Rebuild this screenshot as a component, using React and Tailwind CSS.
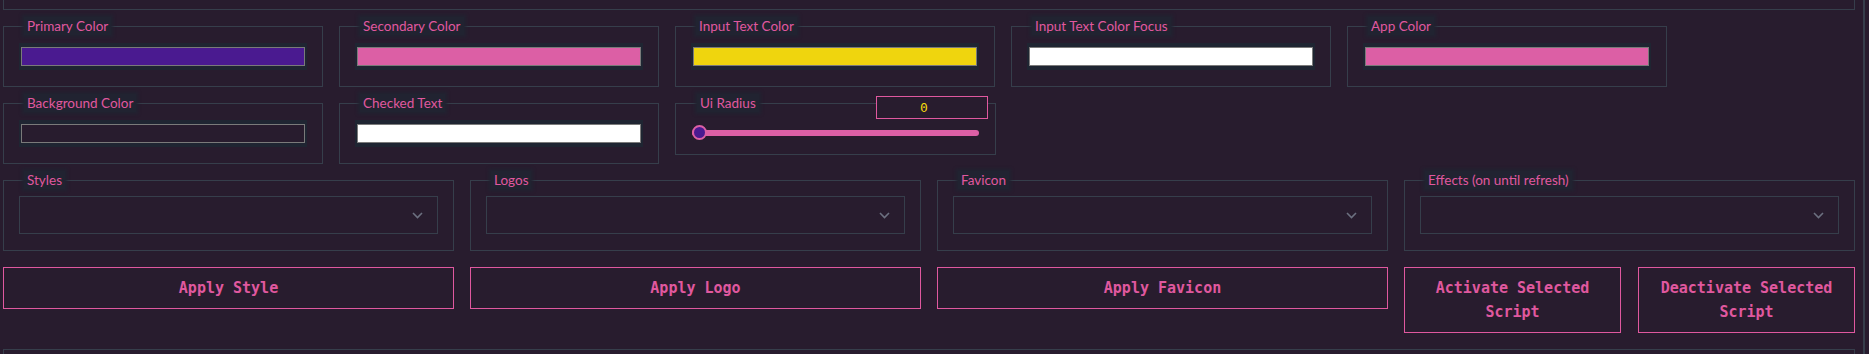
import React from "react";

function Legend({ children }) {
  return (
    <legend className="ml-[5px] px-[3px] h-[18px] leading-[18px] text-[13.5px] text-[#e0589f] bg-[#212331] shadow-[0_0_3px_2px_#212331] font-['Lato',sans-serif]">
      {children}
    </legend>
  );
}

function ColorField({ label, color }) {
  return (
    <fieldset className="w-[320px] border border-[#363e4b] px-[15px] pt-[8px] pb-[16px]">
      <Legend>{label}</Legend>
      <div className="h-[27px] bg-[#1f2532] px-[2px] py-[4px]">
        <div
          className="h-[19px] border border-[#7a7a7a]"
          style={{ backgroundColor: color }}
        />
      </div>
    </fieldset>
  );
}

function RadiusField() {
  return (
    <div className="relative w-[320px]">
      <fieldset className="border border-[#363e4b] px-[16px] pt-[13px] pb-[14px]">
        <Legend>Ui Radius</Legend>
        <div className="relative w-[287px] h-[15px] flex items-center">
          <div className="w-full h-[6px] rounded-full bg-[#dc5fa5]" />
          <div className="absolute left-0 top-0 w-[15px] h-[15px] rounded-full bg-[#4a1a90] border-2 border-[#dc5fa5]" />
        </div>
      </fieldset>
      <div className="absolute right-[7px] top-[2px] w-[112px] h-[23px] border border-[#e0589f] bg-[#281c2e] flex items-center justify-center pr-[16px] text-[13px] text-[#f2d80c] font-['DejaVu_Sans_Mono',monospace]">
        0
      </div>
    </div>
  );
}

function SelectField({ label }) {
  return (
    <fieldset className="border border-[#363e4b] px-[15px] pt-[7px] pb-[16px]">
      <Legend>{label}</Legend>
      <div className="h-[38px] border border-[#363e4b] flex items-center justify-end pr-[14px]">
        <svg width="11" height="7" viewBox="0 0 11 7" fill="none">
          <polyline
            points="1,1 5.5,5.5 10,1"
            stroke="#6c7080"
            strokeWidth="1.6"
          />
        </svg>
      </div>
    </fieldset>
  );
}

function Btn({ children, className = "" }) {
  return (
    <button
      className={
        "border border-[#e0589f] bg-transparent px-[16px] py-[8px] leading-[24px] text-[15px] font-bold text-[#e0589f] font-['DejaVu_Sans_Mono',monospace] text-center " +
        className
      }
    >
      {children}
    </button>
  );
}

export default function App() {
  return (
    <div className="h-[354px] w-full bg-[#281c2e] overflow-hidden flex items-start">
      <div className="ml-[3px] w-[1852px] shrink-0">
        <div className="h-[10px] border-x border-b border-[#363e4b]" />

        <div className="mt-[7px] flex flex-wrap items-start gap-x-[16px] gap-y-[7px]">
          <ColorField label="Primary Color" color="#4a1a90" />
          <ColorField label="Secondary Color" color="#dc5fa5" />
          <ColorField label="Input Text Color" color="#efd50e" />
          <ColorField label="Input Text Color Focus" color="#ffffff" />
          <ColorField label="App Color" color="#dc5fa5" />
          <ColorField label="Background Color" color="#281c2e" />
          <ColorField label="Checked Text" color="#ffffff" />
          <RadiusField />
        </div>

        <div className="mt-[7px] grid grid-cols-4 gap-x-[16px]">
          <SelectField label="Styles" />
          <SelectField label="Logos" />
          <SelectField label="Favicon" />
          <SelectField label="Effects (on until refresh)" />
        </div>

        <div className="mt-[16px] grid grid-cols-4 gap-x-[16px] items-start">
          <Btn>Apply Style</Btn>
          <Btn>Apply Logo</Btn>
          <Btn>Apply Favicon</Btn>
          <div className="flex gap-[17px]">
            <Btn className="flex-1">Activate Selected Script</Btn>
            <Btn className="flex-1">Deactivate Selected Script</Btn>
          </div>
        </div>

        <div className="mt-[16px] h-[20px] border-x border-t border-[#363e4b]" />
      </div>
      <div className="ml-[8px] w-[2px] h-[354px] shrink-0 bg-[#363e4b]" />
    </div>
  );
}
